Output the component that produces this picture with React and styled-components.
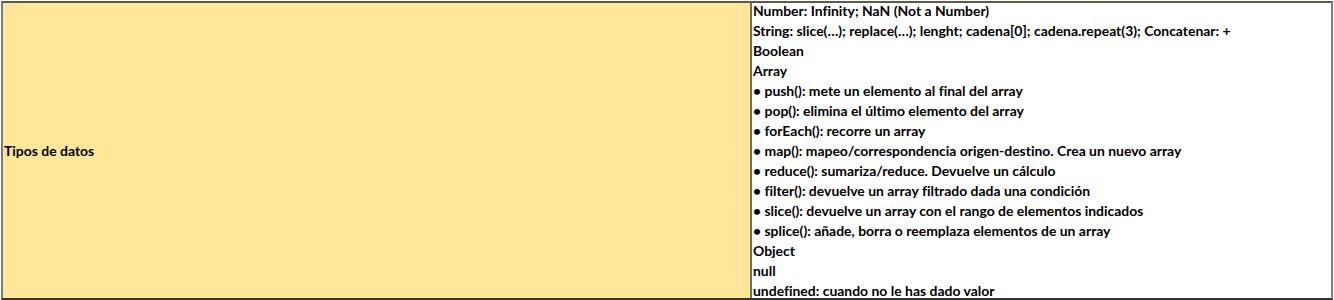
import React from "react";
import styled, { createGlobalStyle } from "styled-components";

const Global = createGlobalStyle`
  html, body { margin: 0; padding: 0; background: #ffffff; }
  body { font-family: Lato, "Open Sans", sans-serif; }
`;

const Page = styled.div`
  width: 1334px;
  height: 300px;
  padding: 1px 0 0 1px;
  box-sizing: border-box;
  overflow: hidden;
  background: #ffffff;
`;

const Sheet = styled.div`
  width: 1332px;
  height: 299px;
  box-sizing: border-box;
  display: grid;
  grid-template-columns: 747px 2px 1fr;
  border-top: 2px solid #5b5b4a;
  border-left: 2px solid #7a7a7a;
  border-right: 2px solid #7f7f7f;
  border-bottom: 2px solid #333333;
  overflow: hidden;
`;

const Cell = styled.div`
  background: ${(p) => p.$bg || "#ffffff"};
  color: #000000;
  font-family: Lato, "Liberation Sans", sans-serif;
  font-weight: 700;
  font-size: 13.95px;
  font-variant-ligatures: none;
  line-height: 20px;
  padding-left: ${(p) => p.$pad || 2}px;
  display: flex;
  flex-direction: column;
  justify-content: ${(p) => (p.$center ? "center" : "flex-start")};
  overflow: hidden;
  white-space: nowrap;
`;

const List = styled.div`
  margin-top: -2px;
  display: flex;
  flex-direction: column;
`;

const Divider = styled.div`
  background: #6e6e66;
`;

const Line = styled.div`
  height: 20px;
  flex: none;
`;

const lines = [
  "Number: Infinity; NaN (Not a Number)",
  "String: slice(…); replace(…); lenght; cadena[0]; cadena.repeat(3); Concatenar: +",
  "Boolean",
  "Array",
  "• push(): mete un elemento al final del array",
  "• pop(): elimina el último elemento del array",
  "• forEach(): recorre un array",
  "• map(): mapeo/correspondencia origen-destino. Crea un nuevo array",
  "• reduce(): sumariza/reduce. Devuelve un cálculo",
  "• filter(): devuelve un array filtrado dada una condición",
  "• slice(): devuelve un array con el rango de elementos indicados",
  "• splice(): añade, borra o reemplaza elementos de un array",
  "Object",
  "null",
  "undefined: cuando no le has dado valor",
];

export default function App() {
  return (
    <>
      <Global />
      <Page>
        <Sheet>
          <Cell $bg="#ffe699" $center $pad={1}>
            <Line>Tipos de datos</Line>
          </Cell>
          <Divider />
          <Cell $pad={1}>
            <List>
              {lines.map((t, i) => (
                <Line key={i}>{t}</Line>
              ))}
            </List>
          </Cell>
        </Sheet>
      </Page>
    </>
  );
}
